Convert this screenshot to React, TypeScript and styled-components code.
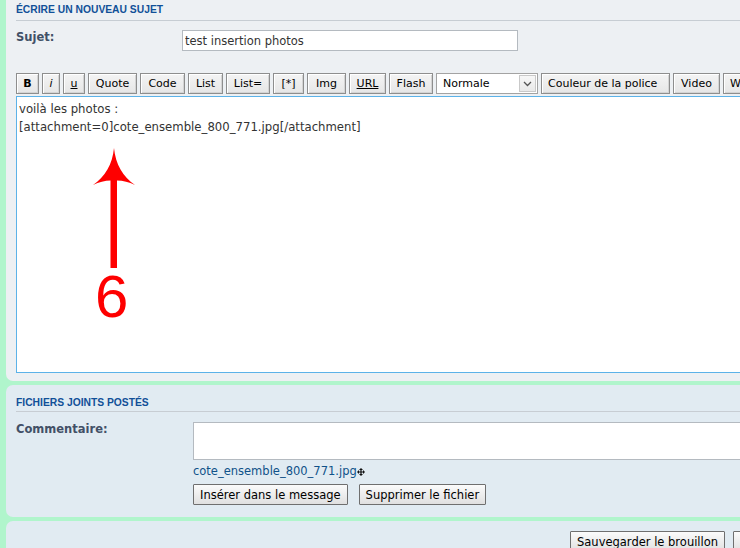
import React from "react";
import styled, { createGlobalStyle } from "styled-components";

const GlobalStyle = createGlobalStyle`
  html, body {
    margin: 0;
    padding: 0;
    background: #b0f5cc;
    overflow: hidden;
  }
  #root { width: 1000px; }
`;

const Page = styled.div`
  width: 1000px;
  padding-left: 6px;
  display: flex;
  flex-direction: column;
  gap: 4px;
  font-family: "DejaVu Sans", Verdana, sans-serif;
  color: #333;
`;

const Panel = styled.section<{ $tone: "grey" | "blue"; $cut?: boolean; $pad: string }>`
  background: ${(p) => (p.$tone === "grey" ? "#edf0f3" : "#e1ebf2")};
  border-radius: ${(p) => (p.$cut ? "0 0 7px 7px" : "7px")};
  padding: ${(p) => p.$pad};
`;

const SectionTitle = styled.h3<{ $top: number; $bottom: number }>`
  margin: 0;
  padding: ${(p) => p.$top}px 0 ${(p) => p.$bottom}px 0;
  font-family: "Liberation Sans", Arial, sans-serif;
  font-size: 10.3px;
  line-height: 13px;
  font-weight: bold;
  text-transform: uppercase;
  color: #115098;
  border-bottom: 1px solid #c7cdd3;
`;

const FieldRow = styled.div<{ $label: number; $mt: number }>`
  display: grid;
  grid-template-columns: ${(p) => p.$label}px 1fr;
  align-items: start;
  margin-top: ${(p) => p.$mt}px;
`;

const Label = styled.label`
  font-size: 11.5px;
  line-height: 13px;
  font-weight: bold;
  color: #425067;
  padding-top: 1px;
`;

const TextInput = styled.input`
  box-sizing: border-box;
  width: 336px;
  height: 21px;
  margin: 0;
  padding: 0 2px;
  border: 1px solid #b4bac0;
  background: #fff;
  font-family: "DejaVu Sans", Verdana, sans-serif;
  font-size: 11.5px;
  color: #333;
  outline: none;
`;

const Toolbar = styled.div`
  display: flex;
  gap: 3px;
  margin-top: 22px;
  height: 21px;
  white-space: nowrap;
`;

const ToolButton = styled.button<{ $w: number; $b?: boolean; $i?: boolean; $u?: boolean }>`
  box-sizing: border-box;
  flex: none;
  width: ${(p) => p.$w}px;
  height: 21px;
  margin: 0;
  padding: 0;
  border: 1px solid #8e8e8e;
  box-shadow: inset 1px 1px 0 #ffffff, inset -1px -1px 0 #d4d4d4;
  background: linear-gradient(#f4f4f4, #e6e6e6);
  font-family: "DejaVu Sans", Verdana, sans-serif;
  font-size: 11px;
  font-weight: ${(p) => (p.$b ? "bold" : "normal")};
  font-style: ${(p) => (p.$i ? "italic" : "normal")};
  text-decoration: ${(p) => (p.$u ? "underline" : "none")};
  color: #000;
  text-align: left;
  padding-left: ${(p) => (p.$w > 60 ? 6 : 0)}px;
  text-align: ${(p) => (p.$w > 60 ? "left" : "center")};
  overflow: hidden;
`;

const SizeSelect = styled.div`
  box-sizing: border-box;
  flex: none;
  width: 102px;
  height: 21px;
  border: 1px solid #a3a3a3;
  background: #fff;
  display: flex;
  align-items: center;
  justify-content: space-between;
  padding: 0 1px 0 6px;
  font-size: 11px;
  color: #000;
`;

const SelectArrow = styled.span`
  box-sizing: border-box;
  width: 17px;
  height: 17px;
  border: 1px solid #c9c9c9;
  background: linear-gradient(#f7f7f7, #e9e9e9);
  display: flex;
  align-items: center;
  justify-content: center;
`;

const EditorWrap = styled.div`
  position: relative;
  margin-top: 2px;
  width: 900px;
  height: 277px;
`;

const Editor = styled.textarea`
  box-sizing: border-box;
  display: block;
  width: 100%;
  height: 100%;
  margin: 0;
  padding: 3px 2px;
  border: 1px solid #5cb2e8;
  background: #fff;
  font-family: "DejaVu Sans", Verdana, sans-serif;
  font-size: 11.7px;
  line-height: 18px;
  color: #333;
  resize: none;
  outline: none;
  overflow: hidden;
`;

const Overlay = styled.svg`
  position: absolute;
  left: 0;
  top: 0;
  pointer-events: none;
`;

const FieldColumn = styled.div`
  display: flex;
  flex-direction: column;
  align-items: flex-start;
`;

const CommentBox = styled.textarea`
  box-sizing: border-box;
  display: block;
  width: 700px;
  height: 38px;
  margin: 0;
  padding: 2px;
  border: 1px solid #b4bac0;
  background: #fff;
  resize: none;
  outline: none;
  font-family: "DejaVu Sans", Verdana, sans-serif;
  font-size: 11.5px;
`;

const FileLink = styled.a`
  display: inline-flex;
  align-items: center;
  margin-top: 4px;
  font-size: 11.5px;
  line-height: 15px;
  color: #105289;
  text-decoration: none;
`;

const ButtonRow = styled.div<{ $gap: number; $mt: number }>`
  display: flex;
  gap: ${(p) => p.$gap}px;
  margin-top: ${(p) => p.$mt}px;
  white-space: nowrap;
`;

const FormButton = styled.button`
  box-sizing: border-box;
  flex: none;
  height: 21px;
  margin: 0;
  padding: 0 6px;
  border: 1px solid #6f6f6f;
  border-radius: 1px;
  background: linear-gradient(#fbfbfb, #e0e0e0);
  font-family: "DejaVu Sans", Verdana, sans-serif;
  font-size: 11.5px;
  color: #000;
`;

const SubmitBar = styled.div`
  padding-left: 564px;
  display: flex;
  gap: 8px;
  white-space: nowrap;
`;

const tools: { label: string; w: number; b?: boolean; i?: boolean; u?: boolean }[] = [
  { label: "B", w: 23, b: true },
  { label: "i", w: 18, i: true },
  { label: "u", w: 22, u: true },
  { label: "Quote", w: 49 },
  { label: "Code", w: 45 },
  { label: "List", w: 35 },
  { label: "List=", w: 44 },
  { label: "[*]", w: 31 },
  { label: "Img", w: 39 },
  { label: "URL", w: 37, u: true },
  { label: "Flash", w: 44 },
];

const tools2 = [
  { label: "Couleur de la police", w: 129 },
  { label: "Video", w: 47 },
  { label: "Wikipedia", w: 70 },
];

export default function App() {
  return (
    <>
      <GlobalStyle />
      <Page>
        <Panel $tone="grey" $cut $pad="0 0 8px 10px">
          <SectionTitle $top={3} $bottom={4}>Écrire un nouveau sujet</SectionTitle>
          <FieldRow $label={166} $mt={9}>
            <Label>Sujet:</Label>
            <TextInput defaultValue="test insertion photos" />
          </FieldRow>
          <Toolbar>
            {tools.map((t) => (
              <ToolButton key={t.label} $w={t.w} $b={t.b} $i={t.i} $u={t.u}>
                {t.label}
              </ToolButton>
            ))}
            <SizeSelect>
              <span>Normale</span>
              <SelectArrow>
                <svg width="9" height="6" viewBox="0 0 9 6">
                  <polyline points="1,1 4.5,4.5 8,1" fill="none" stroke="#555" strokeWidth="1.3" />
                </svg>
              </SelectArrow>
            </SizeSelect>
            {tools2.map((t) => (
              <ToolButton key={t.label} $w={t.w}>
                {t.label}
              </ToolButton>
            ))}
          </Toolbar>
          <EditorWrap>
            <Editor
              readOnly
              defaultValue={"voilà les photos :\n[attachment=0]cote_ensemble_800_771.jpg[/attachment]"}
            />
            <Overlay width="200" height="240" viewBox="0 0 200 240">
              <path
                d="M98,52 C96.5,68 89,81 77,89 Q86,84.5 94.5,84.5 L94.5,172 L101,172 L101,84.5 Q110,84.5 119,89 C107,81 99.5,68 98,52 Z"
                fill="#fe0000"
              />
              <text
                x="79"
                y="221"
                fontFamily="Liberation Sans, Arial, sans-serif"
                fontSize="60"
                fill="#fe0000"
              >
                6
              </text>
            </Overlay>
          </EditorWrap>
        </Panel>

        <Panel $tone="blue" $pad="0 0 12px 10px">
          <SectionTitle $top={11} $bottom={2}>Fichiers joints postés</SectionTitle>
          <FieldRow $label={177} $mt={10}>
            <Label>Commentaire:</Label>
            <FieldColumn>
              <CommentBox readOnly />
              <FileLink href="#">
                cote_ensemble_800_771.jpg
                <svg width="8" height="8" viewBox="0 0 8 8">
                  <path d="M4,0 L6,2 L4.6,2 L4.6,3.4 L6,3.4 L6,2 L8,4 L6,6 L6,4.6 L4.6,4.6 L4.6,6 L6,6 L4,8 L2,6 L3.4,6 L3.4,4.6 L2,4.6 L2,6 L0,4 L2,2 L2,3.4 L3.4,3.4 L3.4,2 L2,2 Z" fill="#111" />
                </svg>
              </FileLink>
              <ButtonRow $gap={11} $mt={5}>
                <FormButton>Insérer dans le message</FormButton>
                <FormButton>Supprimer le fichier</FormButton>
              </ButtonRow>
            </FieldColumn>
          </FieldRow>
        </Panel>

        <Panel $tone="blue" $pad="10px 0 20px 0">
          <SubmitBar>
            <FormButton>Sauvegarder le brouillon</FormButton>
            <FormButton>Aperçu</FormButton>
            <FormButton>Envoyer</FormButton>
          </SubmitBar>
        </Panel>
      </Page>
    </>
  );
}
